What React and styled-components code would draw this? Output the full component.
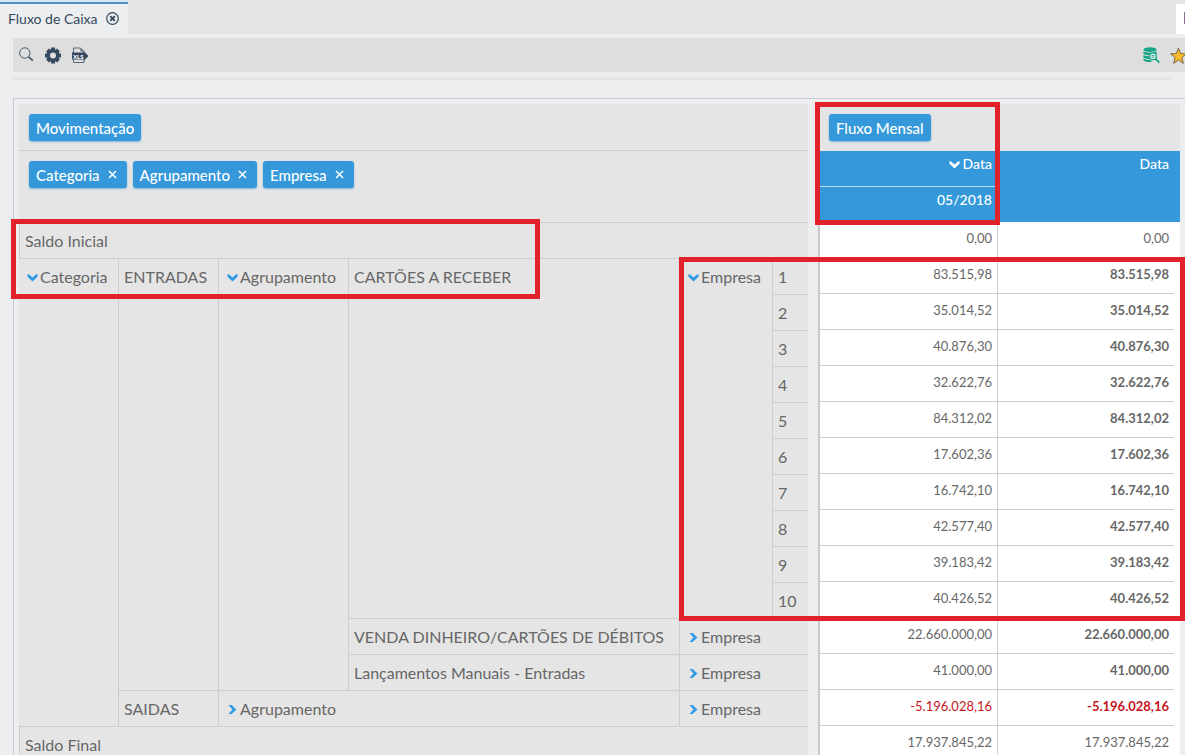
import React from 'react'
import styled, { createGlobalStyle } from 'styled-components'

const blue = '#3498db'
const line = '#cdcdcd'

const GlobalStyle = createGlobalStyle`
    * {
        box-sizing: border-box;
    }

    body {
        margin: 0;
        background: #ecedef;
        color: #676767;
        font-family: Lato, "Open Sans", sans-serif;
        font-size: 16px;
        overflow: hidden;
    }

    button {
        font: inherit;
        color: inherit;
        border: 0;
        padding: 0;
        background: none;
        cursor: pointer;
    }
`;

const Page = styled.div`
    position: relative;
    overflow: hidden;
`;

const TabBar = styled.header`
    display: flex;
    justify-content: space-between;
    height: 34px;
    background: #e4e4e4;
`;

const Tab = styled.div`
    display: flex;
    align-items: center;
    gap: 8px;
    width: 128px;
    padding-left: 8px;
    border-top: 2px solid #dbe6ef;
    background: #edeef0;
    box-shadow: inset 0 2px 0 #4a90c4;
    color: #34495e;
    font-size: 14px;
`;

const TabClose = styled.button`
    display: flex;
`;

const SideTab = styled.div`
    width: 9px;
    margin-top: 4px;
    padding: 8px 0 0 8px;
    background: #fff;

    &::before {
        content: '';
        display: block;
        width: 1px;
        height: 12px;
        background: #8d6c96;
    }
`;

const Toolbar = styled.div`
    display: flex;
    align-items: center;
    justify-content: space-between;
    height: 34px;
    margin: 4px 0 0 13px;
    padding: 2px 0 0 5px;
    background: #dedede;
`;

const ToolGroup = styled.div`
    display: flex;
    align-items: center;
    gap: 10px;
    margin-right: ${props => (props.$end ? '-2px' : '0')};
`;

const ToolButton = styled.button`
    display: flex;
    width: 17px;
    height: 18px;
`;

const Divider = styled.div`
    height: 3px;
    margin: 5px 13px 18px;
    border-radius: 2px;
    background: #e3e4e5;
`;

const Panel = styled.main`
    display: flex;
    gap: 10px;
    margin-left: 13px;
    padding: 5px 5px 0;
    border: solid #c9ccd0;
    border-width: 1px 0 0 1px;
`;

const RowsPane = styled.section`
    flex: none;
    width: 789px;
    background: #e5e5e5;
`;

const ValuesPane = styled.section`
    flex: 1;
    border-left: 2px solid #c9c9c9;
    background: #fff;
`;

const ChipBar = styled.div`
    display: flex;
    align-items: flex-start;
    gap: 6px;
    height: ${props => (props.$tall ? '71px' : '47px')};
    padding: 10px ${props => (props.$narrow ? '9px' : '10px')} 0;
    border-bottom: ${props => (props.$ruled ? `1px solid ${line}` : '0')};
    background: #e5e5e5;
`;

const Chip = styled.button`
    display: flex;
    align-items: center;
    gap: 8px;
    height: 27px;
    padding: 0 ${props => (props.$removable ? '10px' : '7px')} 0 7px;
    border-radius: 3px;
    background: ${blue};
    box-shadow: 0 1px 2px #7fb4da;
    color: #fff;
    font-size: 15px;
    font-weight: 500;
`;

const RowsTable = styled.table`
    width: 100%;
    table-layout: fixed;
    border-spacing: 0;
`;

const RowCell = styled.td`
    height: 36px;
    padding: 7px 0 0 5px;
    border-top: 1px solid ${line};
    border-left: ${props => (props.$open ? '0' : `1px solid ${line}`)};
    line-height: 22px;
    vertical-align: top;
    white-space: nowrap;
`;

const Toggle = styled.button`
    display: flex;
    align-items: center;
    gap: 2px;
    padding-left: 3px;
    line-height: 22px;
`;

const ValuesTable = styled.table`
    width: 100%;
    table-layout: fixed;
    border-spacing: 0;
    text-align: right;
`;

const HeadCell = styled.th`
    height: ${props => (props.rowSpan ? '71px' : props.$ruled ? '36px' : '35px')};
    padding: 3px ${props => (props.$last ? '11px' : '6px')} 0 0;
    border-top: ${props => (props.$ruled ? '1px solid #b9dcf4' : '0')};
    background: ${blue};
    color: #fff;
    font-size: 14px;
    font-weight: 500;
    line-height: 20px;
    vertical-align: top;
    text-align: right;
`;

const HeadToggle = styled.button`
    display: inline-flex;
    align-items: center;
    gap: 3px;
`;

const ValueCell = styled.td`
    height: 36px;
    padding: 6px 5px 0 0;
    border-bottom: 1px solid ${line};
    border-right: ${props => (props.$last ? '0' : `1px solid ${line}`)};
    color: ${props => (props.$negative ? '#c4161c' : 'inherit')};
    font-size: 13px;
    font-weight: ${props => (props.$bold ? 700 : 400)};
    line-height: 20px;
    vertical-align: top;
`;

const Gutter = styled.td`
    padding: 0;
`;

const Highlight = styled.div`
    position: absolute;
    top: ${props => props.$top}px;
    left: ${props => props.$left}px;
    right: ${props => (props.$width ? 'auto' : '0')};
    width: ${props => (props.$width ? `${props.$width}px` : 'auto')};
    height: ${props => props.$height}px;
    border: 5px solid #e1222b;
    pointer-events: none;
`;

const Caret = ({ open, color = '#2f9be6' }) => (
    <svg width="11" height="11" viewBox="0 0 11 11" fill={color} aria-hidden="true">
        {open
            ? <path d="M0.5 2 L2 2.6 L5.5 5.6 L9 2.6 L10.5 2 L10.5 4.8 L5.5 9.6 L0.5 4.8 Z" />
            : <path d="M1.5 1 L4.5 1 L9.5 5.5 L4.5 10 L1.5 10 L5.4 5.5 Z" />}
    </svg>
)

const Cross = () => (
    <svg width="9" height="9" viewBox="0 0 9 9" stroke="#fff" strokeWidth="1.5" aria-hidden="true">
        <path d="M1 1 L8 8 M8 1 L1 8" />
    </svg>
)

const CloseIcon = () => (
    <svg width="13" height="13" viewBox="0 0 13 13" fill="none" stroke="#34495e" aria-hidden="true">
        <circle cx="6.5" cy="6.5" r="5.8" strokeWidth="1.2" />
        <path d="M4.2 4.2 L8.8 8.8 M8.8 4.2 L4.2 8.8" strokeWidth="1.9" />
    </svg>
)

const SearchIcon = () => (
    <svg width="17" height="17" viewBox="0 0 17 17" fill="none" stroke="#4b5a68" aria-hidden="true">
        <circle cx="6.8" cy="6" r="5.2" strokeWidth="1" />
        <path d="M10.6 9.8 L14.8 13.6" strokeWidth="1.8" />
    </svg>
)

const GearIcon = () => (
    <svg width="17" height="18" viewBox="0 0 17 18" aria-hidden="true">
        <g stroke="#34495e" strokeWidth="4">
            <path d="M8 0.5 V16.5 M0 8.5 H16 M2.5 3 L13.5 14 M13.5 3 L2.5 14" />
        </g>
        <circle cx="8" cy="8.5" r="6.4" fill="#34495e" />
        <circle cx="8" cy="8.5" r="3" fill="#dedede" />
    </svg>
)

const XlsIcon = () => (
    <svg width="17" height="18" viewBox="0 0 17 18" aria-hidden="true">
        <path d="M1.5 6 V1 H8.5 L12 4.5 V6 M1.5 12 V15.5 H12 V13" fill="none" stroke="#5c6a77" />
        <path d="M8.5 1 V4.5 H12 Z" fill="#5c6a77" />
        <path d="M0 5.5 H11.5 V4 L16.5 9 L11.5 14 V12.5 H0 Z" fill="#34495e" />
        <text x="1" y="11.5" fill="#fff" fontSize="6" fontWeight="900">XLS</text>
    </svg>
)

const DatabaseIcon = () => (
    <svg width="17" height="17" viewBox="0 0 17 17" aria-hidden="true">
        <g fill="#17a589">
            <ellipse cx="7" cy="2.6" rx="6.6" ry="2.3" />
            <path d="M0.4 4.3 Q7 7.3 13.6 4.3 V7 Q7 9.5 0.4 7 Z" />
            <path d="M0.4 8 Q4 9.7 7 9.2 V12 Q3 12 0.4 10.7 Z" />
            <path d="M0.4 11.8 Q4 13 7.5 13 L9 15 Q3 15.5 0.4 13.6 Z" />
        </g>
        <circle cx="10" cy="9.2" r="3.4" fill="#dff0ec" stroke="#17a589" strokeWidth="1.2" />
        <path d="M8.5 8.5 H11.5 M8.5 10 H11.5" stroke="#17a589" strokeWidth="0.8" />
        <path d="M12.6 12 L16.3 15.6" stroke="#17a589" strokeWidth="1.8" />
    </svg>
)

const StarIcon = () => (
    <svg width="17" height="18" viewBox="0 0 17 18" aria-hidden="true">
        <path
            d="M8.5 1 L10.6 6.6 L16.4 6.8 L11.8 10.5 L13.4 16.4 L8.5 13 L3.6 16.4 L5.2 10.5 L0.6 6.8 L6.4 6.6 Z"
            fill="#fbb829"
            stroke="#7d6b4c"
        />
    </svg>
)

const values = [
    '0,00',
    '83.515,98',
    '35.014,52',
    '40.876,30',
    '32.622,76',
    '84.312,02',
    '17.602,36',
    '16.742,10',
    '42.577,40',
    '39.183,42',
    '40.426,52',
    '22.660.000,00',
    '41.000,00',
    '-5.196.028,16',
    '17.937.845,22',
]

const Level = ({ open, children }) => (
    <Toggle type="button" aria-expanded={Boolean(open)}>
        <Caret open={open} />
        {children}
    </Toggle>
)

const RowTree = () => (
    <RowsTable>
        <colgroup>
            <col width="99" />
            <col width="100" />
            <col width="130" />
            <col width="331" />
            <col width="93" />
            <col width="36" />
        </colgroup>
        <tbody>
            <tr>
                <RowCell colSpan={6}>Saldo Inicial</RowCell>
            </tr>
            <tr>
                <RowCell rowSpan={13} $open><Level open>Categoria</Level></RowCell>
                <RowCell rowSpan={12}>ENTRADAS</RowCell>
                <RowCell rowSpan={12}><Level open>Agrupamento</Level></RowCell>
                <RowCell rowSpan={10}>CARTÕES A RECEBER</RowCell>
                <RowCell rowSpan={10}><Level open>Empresa</Level></RowCell>
                <RowCell>1</RowCell>
            </tr>
            {[2, 3, 4, 5, 6, 7, 8, 9, 10].map(company => (
                <tr key={company}>
                    <RowCell>{company}</RowCell>
                </tr>
            ))}
            <tr>
                <RowCell>VENDA DINHEIRO/CARTÕES DE DÉBITOS</RowCell>
                <RowCell colSpan={2}><Level>Empresa</Level></RowCell>
            </tr>
            <tr>
                <RowCell>Lançamentos Manuais - Entradas</RowCell>
                <RowCell colSpan={2}><Level>Empresa</Level></RowCell>
            </tr>
            <tr>
                <RowCell>SAIDAS</RowCell>
                <RowCell colSpan={2}><Level>Agrupamento</Level></RowCell>
                <RowCell colSpan={2}><Level>Empresa</Level></RowCell>
            </tr>
            <tr>
                <RowCell colSpan={6}>Saldo Final</RowCell>
            </tr>
        </tbody>
    </RowsTable>
)

const Values = () => (
    <ValuesTable>
        <colgroup>
            <col width="178" />
            <col />
            <col width="6" />
        </colgroup>
        <thead>
            <tr>
                <HeadCell>
                    <HeadToggle type="button" aria-expanded="true">
                        <Caret open color="#fff" />
                        Data
                    </HeadToggle>
                </HeadCell>
                <HeadCell rowSpan={2} colSpan={2} $last>Data</HeadCell>
            </tr>
            <tr>
                <HeadCell $ruled>05/2018</HeadCell>
            </tr>
        </thead>
        <tbody>
            {values.map((value, i) => {
                const negative = value.startsWith('-')
                const total = i === 0 || i === values.length - 1
                return (
                    <tr key={value}>
                        <ValueCell $negative={negative}>{value}</ValueCell>
                        <ValueCell $negative={negative} $bold={!total} $last>{value}</ValueCell>
                        <Gutter />
                    </tr>
                )
            })}
        </tbody>
    </ValuesTable>
)

const App = () => (
    <Page>
        <GlobalStyle />
        <TabBar>
            <Tab>
                Fluxo de Caixa
                <TabClose type="button" aria-label="Fechar"><CloseIcon /></TabClose>
            </Tab>
            <SideTab />
        </TabBar>

        <Toolbar>
            <ToolGroup>
                <ToolButton type="button" aria-label="Pesquisar"><SearchIcon /></ToolButton>
                <ToolButton type="button" aria-label="Configurar"><GearIcon /></ToolButton>
                <ToolButton type="button" aria-label="Exportar"><XlsIcon /></ToolButton>
            </ToolGroup>
            <ToolGroup $end>
                <ToolButton type="button" aria-label="Consultar dados"><DatabaseIcon /></ToolButton>
                <ToolButton type="button" aria-label="Favorito"><StarIcon /></ToolButton>
            </ToolGroup>
        </Toolbar>
        <Divider />

        <Panel>
            <RowsPane>
                <ChipBar $ruled><Chip type="button">Movimentação</Chip></ChipBar>
                <ChipBar $tall>
                    <Chip type="button" $removable>Categoria <Cross /></Chip>
                    <Chip type="button" $removable>Agrupamento <Cross /></Chip>
                    <Chip type="button" $removable>Empresa <Cross /></Chip>
                </ChipBar>
                <RowTree />
            </RowsPane>
            <ValuesPane>
                <ChipBar $narrow><Chip type="button">Fluxo Mensal</Chip></ChipBar>
                <Values />
            </ValuesPane>
        </Panel>

        {/* marked areas */}
        <Highlight $top={219} $left={11} $width={529} $height={80} />
        <Highlight $top={102} $left={815} $width={185} $height={123} />
        <Highlight $top={257} $left={679} $height={364} />
    </Page>
)

export default App
